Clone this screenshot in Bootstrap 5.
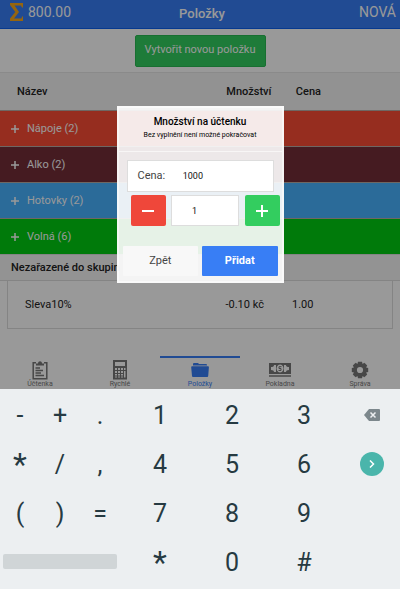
<!DOCTYPE html>
<html lang="cs">
<head>
<meta charset="utf-8">
<meta name="viewport" content="width=device-width, initial-scale=1">
<title>Položky</title>
<link rel="stylesheet" href="https://cdn.jsdelivr.net/npm/bootstrap@5.3.0/dist/css/bootstrap.min.css">
<style>
body{font-family:Roboto,"Noto Sans",sans-serif;font-size:11px;line-height:16px;color:#222;background:#fff}
.topbar{height:29px;background:#387ef5;border-bottom:1px solid #0c60ee;color:#fff;font-size:14px}
.topbar .side{flex:1 1 0}
.topbar h1{font-size:13px;line-height:16px;font-weight:500}
.create{padding:6px 0 5px;border-bottom:1px solid #e6e6e6}
.create .btn{background:#33cd5f;color:#fff;font-size:11px;line-height:16px;padding:6px 9px 8px;border-radius:2px;border:1px solid #28b952}
.cols{display:grid;grid-template-columns:55% 19% 1fr;align-items:center}
.colhead{height:37px;background:#f4f4f4;font-weight:500;padding:0 17px}
.group{height:36px;border:0;border-top:1px solid #b8aca6;color:#fff;padding:0 10px;gap:7px;text-align:left}
.g-red{background:#fb4c35}.g-wine{background:#732d37}.g-sky{background:#48b2ff}.g-green{background:#00cb11}
.rest{height:27px;background:#f5f5f5;border-bottom:1px solid #ddd;border-top:1px solid #ddd;font-size:11px;line-height:16px;font-weight:500;padding:5px 11px 4px}
.loose{height:48px;margin:0 7px;border:1px solid #ddd;border-top:0;padding:0 17px}
.tabs{height:33px}
.tabs a{flex:1 1 0;color:#777;font-size:7px;line-height:8px;text-decoration:none;border-top:2px solid transparent;padding-top:2px}
.tabs a.on{color:#387ef5;border-color:#387ef5}
.dim{inset:0;background:rgba(0,0,0,.4)}
.dialog{width:167px;background:rgba(255,255,255,.9);border:2px solid rgba(255,255,255,.5)}
.dialog header{padding:6px 0 11px;border-bottom:1px solid rgba(255,255,255,.6)}
.dialog h2{font-size:10px;line-height:16px;font-weight:500;color:#000}
.dialog p{font-size:7px;line-height:10px;color:#000}
.field{background:#fff;border:1px solid #ddd;height:32px;color:#444;padding:0 10px}
.field input,.qty{font-size:9px;border:0;outline:0;color:#111;min-width:0}
.qty{width:68px;height:31px;background:#fff;border:1px solid #ddd;padding:0 20px}
.steps{padding:3px 2px 0 12px}
.step{width:35px;height:31px;border-radius:2px;border:0;padding:0;color:#fff}
.minus{background:#ef473a}.plus{background:#33cd5f}
.acts{padding:20px 4px 5px}
.act{flex:1 1 0;height:30px;border:0;border-radius:1px;padding:0;background:#f8f8f8;color:#444}
.act.ok{background:#387ef5;color:#fff;font-weight:700}
.keys{display:grid;grid-template-columns:10fr 10fr 10fr 1fr 18fr 18fr 18fr 15fr;grid-auto-rows:49px;background:#eceff1;padding:1px 0 3px}
.keys button{border:0;background:none;padding:2px 0 0;color:#263a42;font-size:25px;line-height:32px}
.keys .star{font-size:32px;padding:0}
.keys .digit{grid-column-start:5}
.keys .fn{padding:0 0 0 4px}
.keys .space{grid-column:1/4;padding:0 3px}
.bar{height:15px;border-radius:2px;background:#d0d5d7}
.go{width:24px;height:24px;border-radius:50%;background:#4ab5ab}
svg{display:block}
</style>
<script src="https://cdn.jsdelivr.net/npm/bootstrap@5.3.0/dist/js/bootstrap.bundle.min.js"></script>
</head>
<body class="d-flex flex-column min-vh-100">
<div class="position-relative flex-grow-1 d-flex flex-column">
  <header class="topbar d-flex align-items-center">
    <div class="side d-flex align-items-center ps-2 gap-1 pb-1">
      <svg width="16" height="18" viewBox="0 0 16 18" fill="#fba91a"><path d="M2 0h13v4.500h-1L13 2.500H6.500L11 9l-5 6.500h7.500l.5-2h1V18H2v-2.500L7.300 9 2 2z"/></svg>
      <span>800.00</span>
    </div>
    <h1 class="m-0">Položky</h1>
    <div class="side text-end pe-1 pb-1">NOVÁ</div>
  </header>
  <main class="flex-grow-1">
    <div class="create text-center"><button class="btn" type="button">Vytvořit novou položku</button></div>
    <div class="colhead cols"><span>Název</span><span class="ps-2">Množství</span><span class="ps-2">Cena</span></div>
    <button type="button" class="group g-red w-100 d-flex align-items-center"><svg width="10" height="10" viewBox="0 0 10 10" stroke="#fff" stroke-width="1.5"><path d="M5 1v8M1 5h8"/></svg>Nápoje (2)</button>
    <button type="button" class="group g-wine w-100 d-flex align-items-center"><svg width="10" height="10" viewBox="0 0 10 10" stroke="#fff" stroke-width="1.5"><path d="M5 1v8M1 5h8"/></svg>Alko (2)</button>
    <button type="button" class="group g-sky w-100 d-flex align-items-center"><svg width="10" height="10" viewBox="0 0 10 10" stroke="#fff" stroke-width="1.5"><path d="M5 1v8M1 5h8"/></svg>Hotovky (2)</button>
    <button type="button" class="group g-green w-100 d-flex align-items-center"><svg width="10" height="10" viewBox="0 0 10 10" stroke="#fff" stroke-width="1.5"><path d="M5 1v8M1 5h8"/></svg>Volná (6)</button>
    <h2 class="rest m-0">Nezařazené do skupin</h2>
    <div class="loose cols"><span>Sleva10%</span><span class="ps-2">-0.10 kč</span><span class="ps-2">1.00</span></div>
  </main>
  <nav class="tabs d-flex">
    <a href="#" class="d-flex flex-column align-items-center"><svg width="16" height="20" viewBox="0 0 16 20" fill="none" stroke="#777" stroke-width="1.5"><path d="M4 2.7H1.2v16h13.6v-16H12M3.5 8H8M3.5 10.500H11M3.500 13H9M3.500 15.500H12"/><path d="M4 5.500V3.500h2C6 .5 10 .5 10 3.500h2v2z" fill="#777" stroke="none"/></svg>Účtenka</a>
    <a href="#" class="d-flex flex-column align-items-center"><svg width="16" height="20" viewBox="0 0 16 20"><path fill="#777" fill-rule="evenodd" d="M1 0h14v19.500H1zM3 2v4h10V2zM3 8v2h2V8zm3 0v2h2V8zm3 0v2h2V8zm3 0v2h1.500V8zM3 11v2h2v-2zm3 0v2h2v-2zm3 0v2h2v-2zm3 0v6.500h1.500V11zM3 14v1.500h2V14zm3 0v1.500h2V14zm3 0v1.500h2V14zM3 16.500v1h2v-1zm3 0v1h2v-1zm3 0v1h2v-1z"/></svg>Rychlé</a>
    <a href="#" class="on d-flex flex-column align-items-center"><svg width="18" height="20" viewBox="0 0 18 20" fill="#387ef5"><path d="M2 5.500V4q0-1 1-1h4l1 1h7q1 0 1 1v.5zM1 6.200h16q1 0 .9 1l-.7 8.800q-.1 1-1 1H2q-1 0-1-1L.2 7.200Q.2 6.200 1 6.200z"/></svg>Položky</a>
    <a href="#" class="d-flex flex-column align-items-center"><svg width="22" height="20" viewBox="0 0 22 20"><path fill="#777" fill-rule="evenodd" d="M0 3h22v11H0zM5 5Q5 7 2 7v3q3 0 3 2h2V5zM17 5q0 2 3 2v3q-3 0-3 2h-2V5zM11 4.500a3.500 4 0 1 0 .1 0z"/><path d="M0 16h22" stroke="#777" stroke-width="1.500"/><path d="M12.500 6.700h-2.500v1.800h2v2H9.500" fill="none" stroke="#777"/></svg>Pokladna</a>
    <a href="#" class="d-flex flex-column align-items-center"><svg width="18" height="20" viewBox="-9 -10 18 20"><g fill="#777"><path id="tooth" d="M-2-8.200h4l1 4h-6z"/><use href="#tooth" transform="rotate(45)"/><use href="#tooth" transform="rotate(90)"/><use href="#tooth" transform="rotate(135)"/><use href="#tooth" transform="rotate(180)"/><use href="#tooth" transform="rotate(225)"/><use href="#tooth" transform="rotate(270)"/><use href="#tooth" transform="rotate(315)"/></g><circle r="4.800" fill="none" stroke="#777" stroke-width="3.400"/></svg>Správa</a>
  </nav>
  <div class="dim position-absolute d-flex align-items-center justify-content-center">
    <section class="dialog" role="dialog" aria-labelledby="dlg">
      <header class="text-center"><h2 id="dlg" class="m-0">Množství na účtenku</h2><p class="m-0">Bez vyplnění není možné pokračovat</p></header>
      <div class="px-2 pt-2">
        <label class="field d-flex align-items-center"><span class="col-3 me-2">Cena:</span><input class="flex-fill ms-1 bg-transparent" type="text" value="1000"></label>
      </div>
      <div class="steps d-flex justify-content-between">
        <button type="button" class="step minus d-flex align-items-center justify-content-center" aria-label="Ubrat"><svg width="14" height="14" viewBox="0 0 14 14" stroke="#fff" stroke-width="2"><path d="M1 7h12"/></svg></button>
        <input class="qty" type="text" value="1" aria-label="Množství">
        <button type="button" class="step plus d-flex align-items-center justify-content-center" aria-label="Přidat kus"><svg width="14" height="14" viewBox="0 0 14 14" stroke="#fff" stroke-width="2"><path d="M1 7h12M7 1v12"/></svg></button>
      </div>
      <div class="acts d-flex gap-1"><button type="button" class="act">Zpět</button><button type="button" class="act ok">Přidat</button></div>
    </section>
  </div>
</div>
<div class="keys">
  <button type="button">-</button><button type="button">+</button><button type="button">.</button><button type="button" class="digit">1</button><button type="button">2</button><button type="button">3</button>
  <button type="button" class="fn d-flex align-items-center justify-content-center" aria-label="Smazat"><svg width="16" height="12" viewBox="0 0 16 12"><path d="M5 0h10q1 0 1 1v10q0 1-1 1H5L0 6z" fill="#7c878c"/><path d="M6.500 3.500l5 5m0-5l-5 5" stroke="#eceff1" stroke-width="1.500"/></svg></button>
  <button type="button" class="star">*</button><button type="button">/</button><button type="button">,</button><button type="button" class="digit">4</button><button type="button">5</button><button type="button">6</button>
  <button type="button" class="fn d-flex align-items-center justify-content-center" aria-label="Další"><span class="go d-flex align-items-center justify-content-center"><svg width="8" height="8" viewBox="0 0 8 8" fill="none" stroke="#fff" stroke-width="1.500"><path d="M2 .5L5.500 4 2 7.500"/></svg></span></button>
  <button type="button">(</button><button type="button">)</button><button type="button">=</button><button type="button" class="digit">7</button><button type="button">8</button><button type="button">9</button>
  <button type="button" class="space" aria-label="Mezera"><span class="bar d-block"></span></button><button type="button" class="digit star">*</button><button type="button">0</button><button type="button">#</button>
</div>
</body>
</html>
